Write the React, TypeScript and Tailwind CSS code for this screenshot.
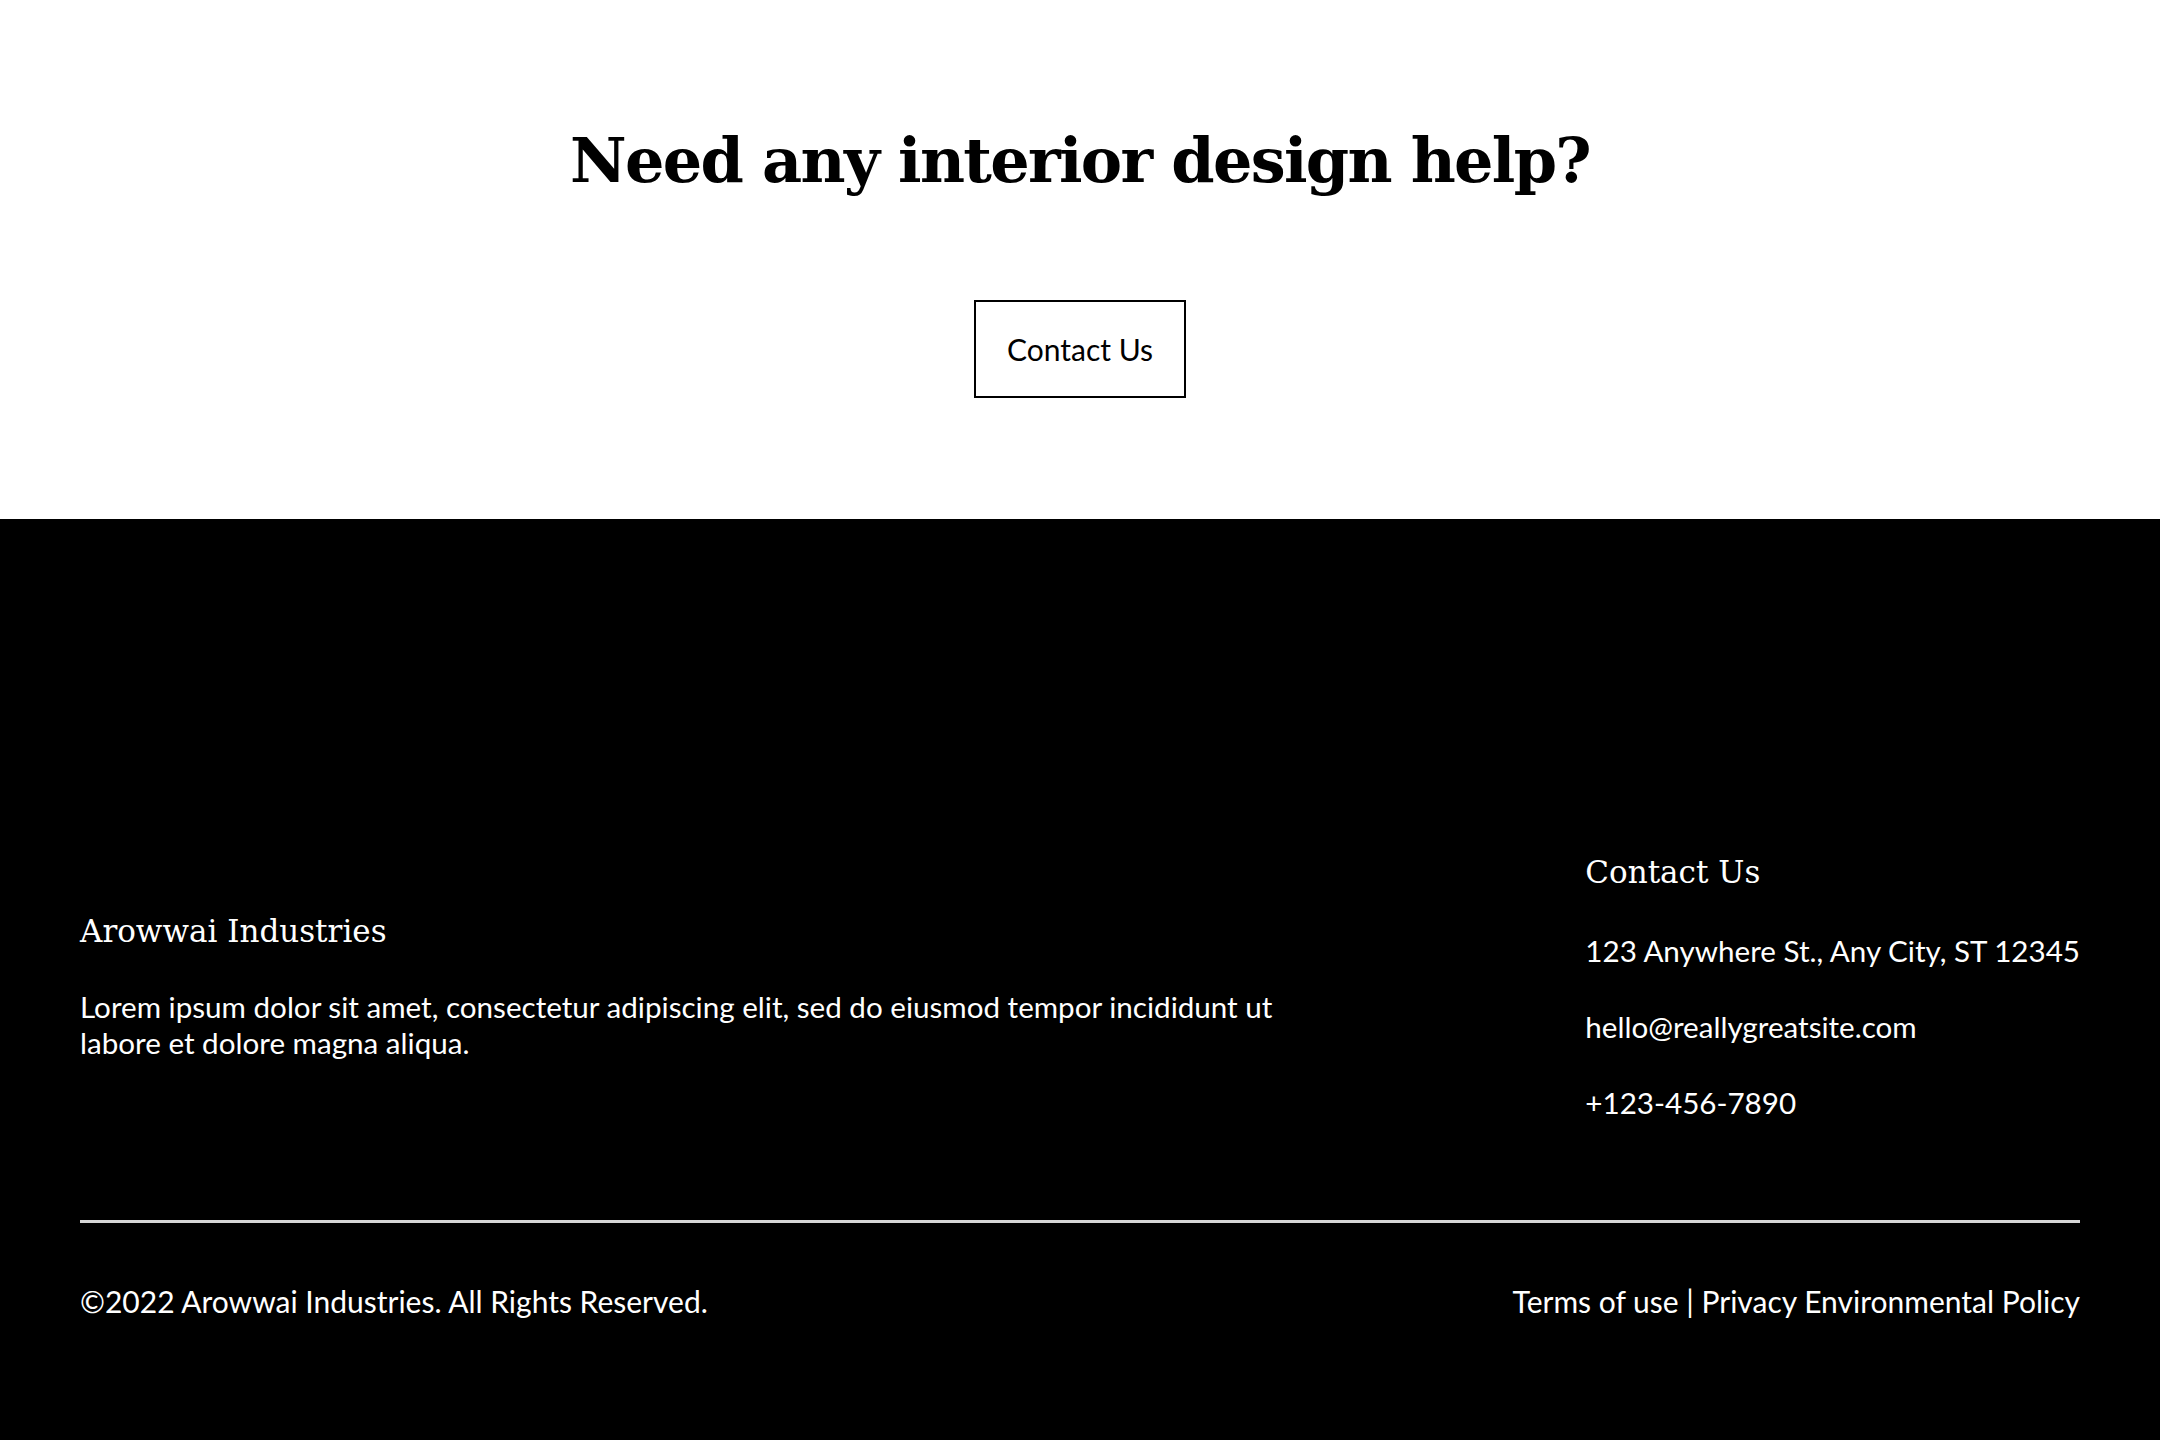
import React from "react";

const slab = "font-['DejaVu_Serif',serif]";
const sans = "font-['Lato',sans-serif]";

const contactLines = [
  "123 Anywhere St., Any City, ST 12345",
  "hello@reallygreatsite.com",
  "+123-456-7890",
];

const App = () => {
  return (
    <div className={`min-h-[1440px] w-full bg-white ${sans}`}>
      {/* call to action */}
      <section className="flex h-[519px] flex-col items-center pt-[121px]">
        <h1 className={`${slab} text-[62px] font-bold leading-[80px] tracking-[-1.7px] text-black`}>
          Need any interior design help?
        </h1>
        <button className="mt-[99px] flex h-[98px] w-[212px] items-center justify-center border-2 border-black text-[30px] leading-none text-black">
          Contact Us
        </button>
      </section>

      {/* footer */}
      <footer className="bg-black px-[80px] pt-[333px] pb-[121px] text-white">
        <div className="flex items-center justify-between">
          <div className="flex w-[1230px] flex-col gap-[38px]">
            <h3 className={`${slab} text-[31px] leading-[40px]`}>Arowwai Industries</h3>
            <p className="text-[29.6px] leading-[36px]">
              Lorem ipsum dolor sit amet, consectetur adipiscing elit, sed do eiusmod tempor incididunt ut
              labore et dolore magna aliqua.
            </p>
          </div>
          <div className="flex flex-col gap-[41px]">
            <h3 className={`${slab} text-[31px] leading-[40px]`}>Contact Us</h3>
            {contactLines.map((line) => (
              <p key={line} className="text-[29.6px] leading-[35px]">
                {line}
              </p>
            ))}
          </div>
        </div>

        <div className="mt-[100px] h-[3px] bg-[#d6d6d6]" />

        <div className="mt-[61px] flex items-center justify-between text-[30px] leading-[35px]">
          <span>©2022 Arowwai Industries. All Rights Reserved.</span>
          <span>Terms of use | Privacy Environmental Policy</span>
        </div>
      </footer>
    </div>
  );
};

export default App;
